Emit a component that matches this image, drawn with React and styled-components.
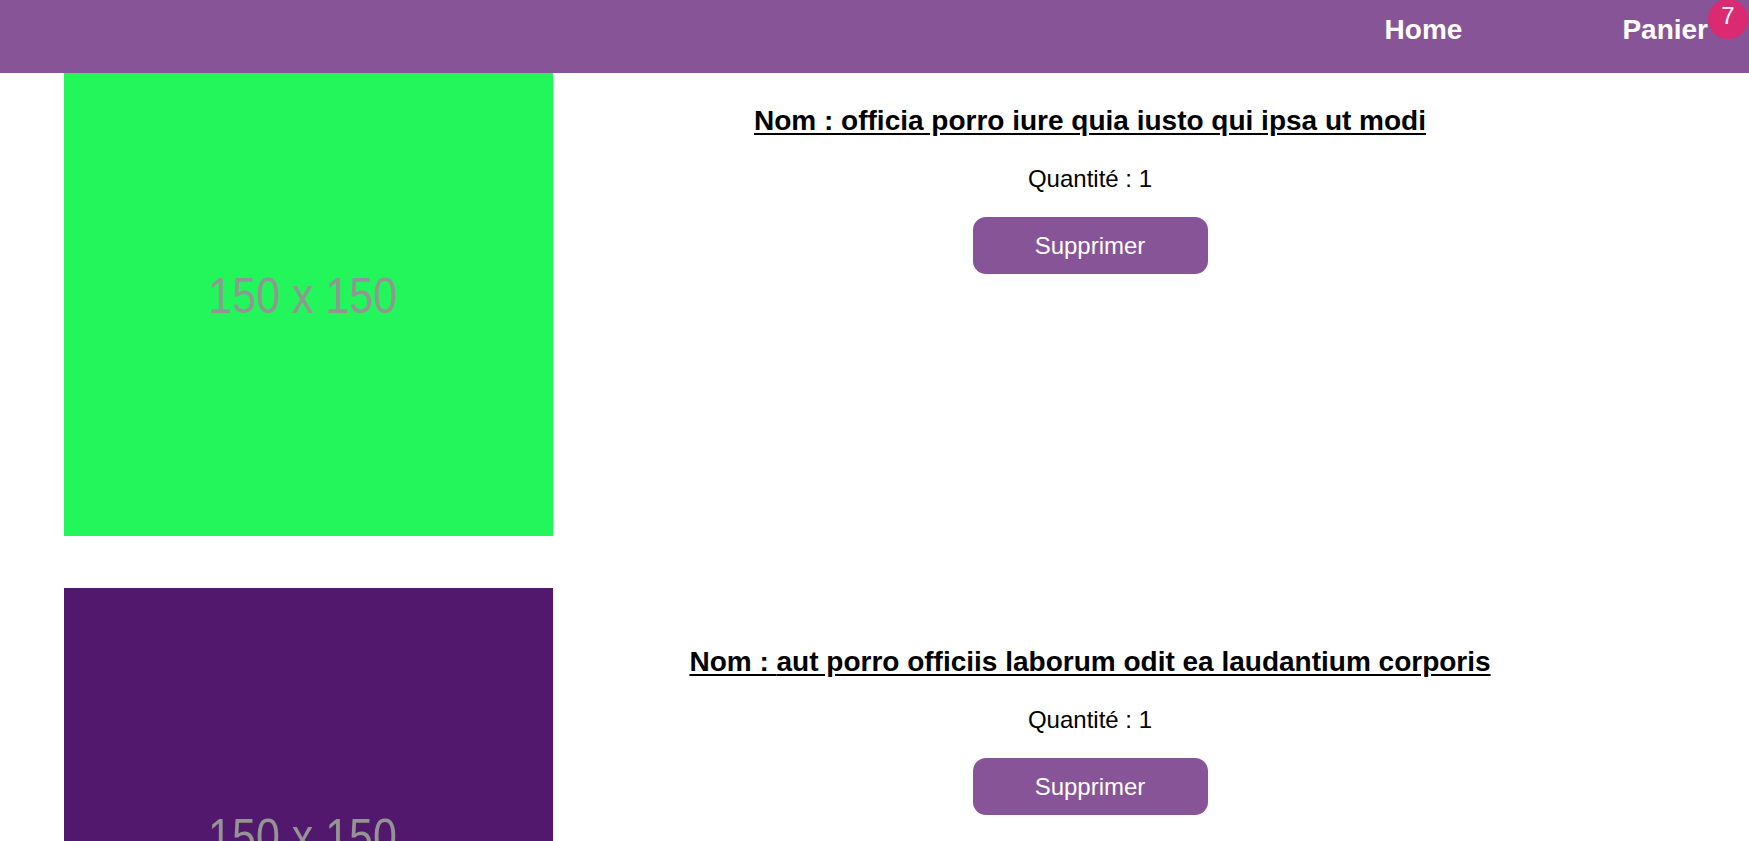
import React from "react";
import styled, { createGlobalStyle } from "styled-components";

const Global = createGlobalStyle`
  html, body { margin: 0; padding: 0; background: #fff; }
  body { font-family: "Liberation Sans", Arial, sans-serif; color: #000; overflow: hidden; }
`;

const Header = styled.header`
  position: fixed;
  top: 0;
  left: 0;
  right: 0;
  height: 73px;
  background: #875597;
  z-index: 10;
  display: flex;
  justify-content: flex-end;
  align-items: flex-start;
  padding: 14px 41px 0 0;
  box-sizing: border-box;
`;

const Nav = styled.nav`
  display: flex;
  gap: 160px;
`;

const NavLink = styled.a`
  position: relative;
  color: #fff;
  font-size: 28px;
  font-weight: 700;
  text-decoration: none;
  line-height: 32px;
`;

const Badge = styled.span`
  position: absolute;
  top: -15px;
  right: -40px;
  width: 40px;
  height: 40px;
  border-radius: 50%;
  background: #d92a72;
  color: #fff;
  font-size: 24px;
  font-weight: 400;
  display: flex;
  align-items: center;
  justify-content: center;
  line-height: 1;
  padding-bottom: 6px;
  box-sizing: border-box;
`;

const Main = styled.main`
  padding-top: 47px;
  display: flex;
  flex-direction: column;
  gap: 52px;
`;

const Item = styled.article`
  display: grid;
  grid-template-columns: 489px 1074px;
  padding-left: 64px;
`;

const Thumb = styled.div`
  width: 489px;
  height: 489px;
  background: ${(p) => p.$bg};
  display: flex;
  align-items: center;
  justify-content: center;
  padding-right: 12px;
  padding-top: 9px;
  box-sizing: border-box;
`;

const ThumbText = styled.span`
  font-family: "Liberation Sans", Arial, sans-serif;
  font-size: 43px;
  color: #949494;
  transform: scaleY(1.16);
  filter: blur(0.4px);
  white-space: nowrap;
`;

const Info = styled.div`
  display: flex;
  flex-direction: column;
  align-items: center;
  padding-top: 58px;
`;

const Title = styled.h2`
  margin: 0;
  font-size: 28px;
  font-weight: 700;
  text-decoration: underline;
  text-underline-offset: 3px;
  line-height: 32px;
`;

const Qty = styled.p`
  margin: 28px 0 0;
  font-size: 24px;
  line-height: 28px;
`;

const DeleteButton = styled.button`
  margin-top: 24px;
  width: 235px;
  height: 57px;
  border: none;
  border-radius: 13px;
  background: #875597;
  color: #fff;
  font-family: "Liberation Sans", Arial, sans-serif;
  font-size: 24px;
  display: flex;
  align-items: center;
  justify-content: center;
  cursor: pointer;
`;

const items = [
  { name: "officia porro iure quia iusto qui ipsa ut modi", qty: 1, color: "#23f65a" },
  { name: "aut porro officiis laborum odit ea laudantium corporis", qty: 1, color: "#52186d" },
];

export default function App() {
  return (
    <>
      <Global />
      <Header>
        <Nav>
          <NavLink href="#">Home</NavLink>
          <NavLink href="#">
            Panier
            <Badge>7</Badge>
          </NavLink>
        </Nav>
      </Header>
      <Main>
        {items.map((it, i) => (
          <Item key={i}>
            <Thumb $bg={it.color}>
              <ThumbText>150 x 150</ThumbText>
            </Thumb>
            <Info>
              <Title>Nom : {it.name}</Title>
              <Qty>Quantité : {it.qty}</Qty>
              <DeleteButton>Supprimer</DeleteButton>
            </Info>
          </Item>
        ))}
      </Main>
    </>
  );
}
